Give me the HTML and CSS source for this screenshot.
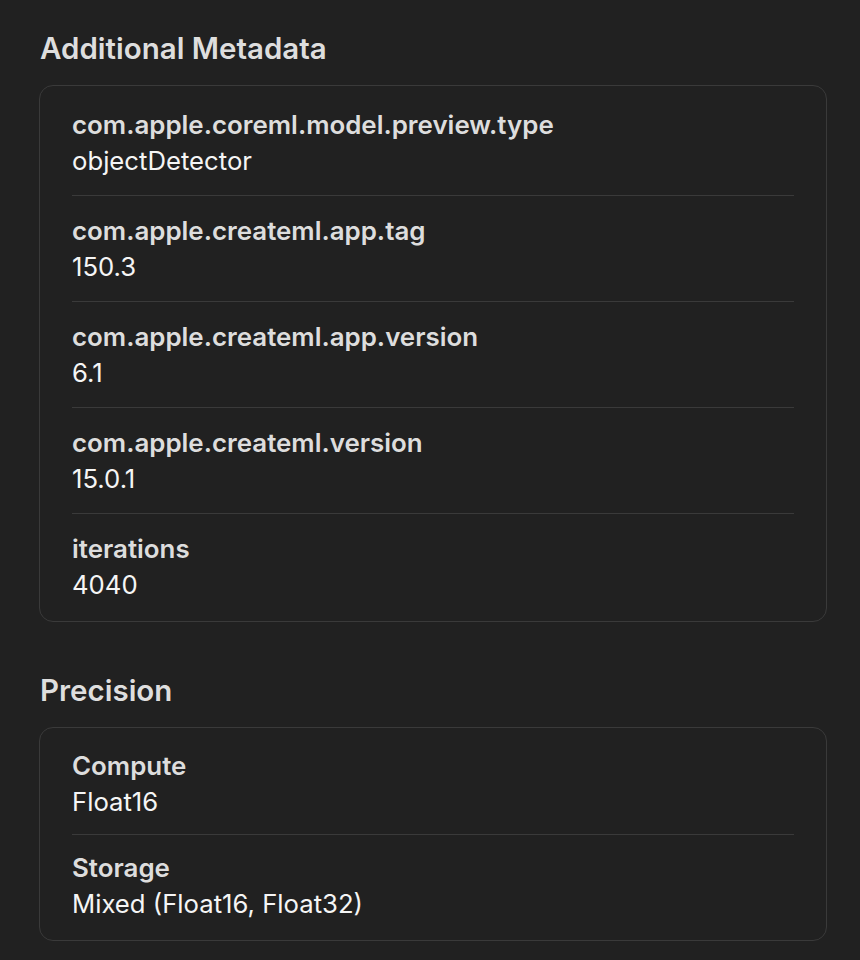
FILE: index.html
```html
<!DOCTYPE html>
<html>
<head>
<meta charset="utf-8">
<link rel="stylesheet" href="styles.css">
</head>
<body>
<div class="page">
  <section class="section">
    <h2 class="heading">Additional Metadata</h2>
    <div class="card">
      <div class="row">
        <div class="label">com.apple.coreml.model.preview.type</div>
        <div class="value">objectDetector</div>
      </div>
      <div class="row">
        <div class="label">com.apple.createml.app.tag</div>
        <div class="value">150.3</div>
      </div>
      <div class="row">
        <div class="label">com.apple.createml.app.version</div>
        <div class="value">6.1</div>
      </div>
      <div class="row">
        <div class="label">com.apple.createml.version</div>
        <div class="value">15.0.1</div>
      </div>
      <div class="row">
        <div class="label">iterations</div>
        <div class="value">4040</div>
      </div>
    </div>
  </section>
  <section class="section section-second">
    <h2 class="heading">Precision</h2>
    <div class="card card-compact">
      <div class="row">
        <div class="label">Compute</div>
        <div class="value">Float16</div>
      </div>
      <div class="row">
        <div class="label">Storage</div>
        <div class="value">Mixed (Float16, Float32)</div>
      </div>
    </div>
  </section>
</div>
</body>
</html>
```

FILE: styles.css
```css
html, body {
  margin: 0;
  padding: 0;
  background: #212121;
}

body {
  font-family: Inter, "Noto Sans", "Liberation Sans", sans-serif;
  color: #e2e2e2;
}

.page {
  padding: 30px 33px 0 39px;
}

.heading {
  margin: 0;
  font-size: 29.5px;
  line-height: 36px;
  font-weight: 600;
  color: #dedede;
  padding-left: 1px;
}

.section-second {
  margin-top: 50px;
}

.card {
  margin-top: 19px;
  border: 1.5px solid #3a3a3a;
  border-radius: 14px;
  padding: 4px 32px 2px 32px;
}

.row {
  padding: 17px 0 16px;
}

.row + .row {
  border-top: 1.5px solid #3a3a3a;
}

.card-compact .row {
  padding: 15px 0 14px;
}

.card-compact .row:first-child {
  padding-top: 16px;
}

.card-compact .row:last-child {
  padding-bottom: 16px;
}

.label {
  font-size: 25.9px;
  line-height: 36px;
  font-weight: 600;
  color: #dddddd;
}

.value {
  font-size: 25.7px;
  line-height: 36px;
  font-weight: 400;
  color: #f5f5f5;
}
```
